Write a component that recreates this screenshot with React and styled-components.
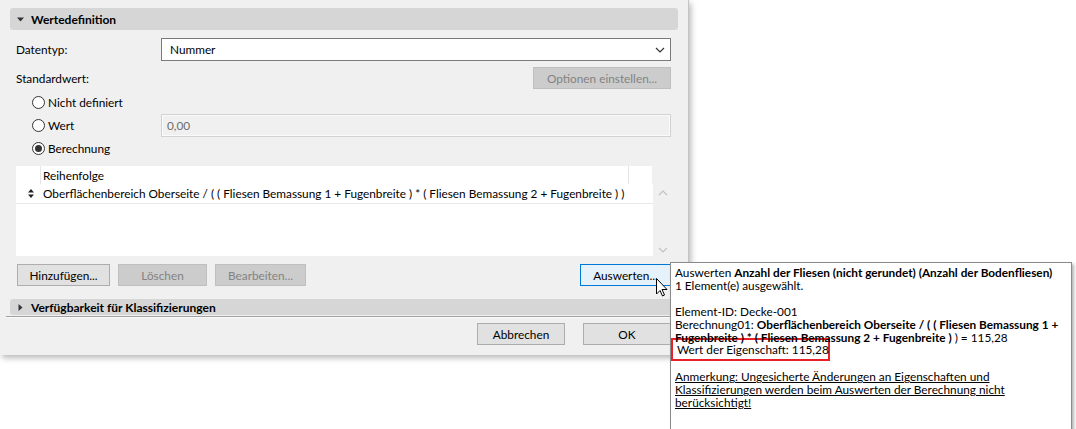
import styled, { createGlobalStyle } from 'styled-components';

const GlobalStyle = createGlobalStyle`
  html, body {
    margin: 0;
    padding: 0;
    background: #ffffff;
  }
  body {
    font-family: Lato, "Liberation Sans", Arial, sans-serif;
    font-size: 11.8px;
    color: #000;
  }
`

const Page = styled.div`
  position: relative;
  width: 1076px;
  height: 429px;
  overflow: hidden;
`

const Dialog = styled.div`
  width: 678px;
  height: 355px;
  padding: 0 10px 0 0;
  background: #f0f0f0;
  border-right: 1px solid #c4c4c4;
  box-shadow: 2px 3px 6px rgba(0, 0, 0, 0.28);
  display: flex;
  flex-direction: column;
`

const Content = styled.div`
  padding-left: 10px;
  display: flex;
  flex-direction: column;
`

const SectionHeader = styled.div`
  margin-top: ${p => p.$top}px;
  height: ${p => p.$h}px;
  background: #d6d6d6;
  border-radius: 3px;
  display: flex;
  align-items: center;
  gap: 7px;
  padding-left: 7px;
  font-weight: bold;
  font-size: 12px;
`

const Form = styled.div`
  padding-left: 6px;
  padding-right: 7px;
  display: flex;
  flex-direction: column;
`

const FieldRow = styled.div`
  display: grid;
  grid-template-columns: 145px 1fr;
  align-items: center;
  height: ${p => p.$h}px;
  margin-top: ${p => p.$top || 0}px;
`

const Select = styled.div`
  height: 21px;
  border: 1px solid #7a7a7a;
  background: #fff;
  display: flex;
  align-items: center;
  justify-content: space-between;
  padding: 0 5px 0 8px;
`

const RightCell = styled.div`
  display: flex;
  justify-content: flex-end;
`

const Button = styled.div`
  box-sizing: border-box;
  width: ${p => p.$w}px;
  height: 22px;
  display: flex;
  align-items: center;
  justify-content: center;
  background: ${p => p.$disabled ? '#cccccc' : p.$focus ? '#e5f1fb' : '#e1e1e1'};
  border: 1px solid ${p => p.$disabled ? '#bfbfbf' : p.$focus ? '#0078d7' : '#adadad'};
  color: ${p => p.$disabled ? '#838383' : '#000'};
  white-space: nowrap;
`

const RadioRow = styled.div`
  display: grid;
  grid-template-columns: 145px 1fr;
  align-items: center;
  height: 23px;
  margin-top: ${p => p.$top || 0}px;
`

const RadioLabel = styled.label`
  display: flex;
  align-items: center;
  gap: 3px;
  padding-left: 16px;
`

const RadioCircle = styled.span`
  box-sizing: border-box;
  width: 13px;
  height: 13px;
  border-radius: 50%;
  border: 1px solid #333;
  background: #fff;
  display: flex;
  align-items: center;
  justify-content: center;
  &::after {
    content: '';
    width: 7px;
    height: 7px;
    border-radius: 50%;
    background: ${p => p.$checked ? '#333' : 'transparent'};
  }
`

const TextInput = styled.div`
  height: 21px;
  border: 1px solid #d2d2d2;
  box-shadow: inset 0 0 0 1px #fafafa;
  background: #f0f0f0;
  color: #6d6d6d;
  display: flex;
  align-items: center;
  padding-left: 5px;
`

const List = styled.div`
  margin-top: 6px;
  height: 90px;
  display: grid;
  grid-template-columns: 637px 16px;
  grid-template-rows: 18px 1fr;
`

const ListHeader = styled.div`
  background: #fff;
  display: grid;
  grid-template-columns: 24px 1fr 24px;
  margin-right: 1px;
`

const HeaderCell = styled.div`
  display: flex;
  align-items: center;
  padding-left: ${p => p.$pad || 0}px;
  border-left: ${p => p.$line ? '1px solid #e5e5e5' : 'none'};
`

const ListBody = styled.div`
  grid-column: 1;
  background: #fff;
`

const ListRow = styled.div`
  height: 19px;
  border-bottom: 1px solid #e8e8e8;
  display: grid;
  grid-template-columns: 27px 1fr;
  align-items: center;
  white-space: nowrap;
`

const SortIcon = styled.span`
  display: flex;
  justify-content: center;
  padding-left: 2px;
`

const Scrollbar = styled.div`
  grid-column: 2;
  grid-row: 2;
  display: flex;
  flex-direction: column;
  justify-content: space-between;
  align-items: center;
  padding: 6px 0 3px 4px;
`

const ButtonRow = styled.div`
  margin-top: 8px;
  display: flex;
  gap: 8px;
  padding-left: 1px;
  & > :last-child {
    margin-left: auto;
  }
`

const Separator = styled.div`
  margin: 1px 0 0 6px;
  border-top: 1px solid #a0a0a0;
  border-bottom: 1px solid #fafafa;
`

const Footer = styled.div`
  margin-top: 5px;
  display: flex;
  justify-content: flex-end;
  gap: 18px;
  padding-right: 7px;
`

const Tooltip = styled.div`
  position: absolute;
  left: 670px;
  top: 262px;
  width: 396px;
  height: 164px;
  padding: 3px 0 0 4px;
  background: #fff;
  border: 1px solid #8a8a8a;
  box-shadow: 2px 2px 3px rgba(0, 0, 0, 0.3);
  line-height: 13px;
  white-space: nowrap;
`

const TipLine = styled.div`
  height: 13px;
`

const Highlight = styled.div`
  margin: -6px 0 -4px -4px;
  padding: 3px 0 3px 4px;
  width: 151px;
  height: 13px;
  border: 2px solid #e8202a;
`

const Note = styled.div`
  text-decoration: underline;
`

const Cursor = styled.svg`
  position: absolute;
  left: 656px;
  top: 278px;
`

const Caret = ({ open }) => (
  <svg width="7" height="7" viewBox="0 0 7 7">
    {open
      ? <path d="M0 1.5 L7 1.5 L3.5 5.5 Z" fill="#333" />
      : <path d="M1.5 0 L5.5 3.5 L1.5 7 Z" fill="#333" />}
  </svg>
)

const Chevron = ({ up, color = '#333', w = 10 }) => (
  <svg width={w} height="6" viewBox="0 0 10 6">
    <path d={up ? 'M1 5 L5 1 L9 5' : 'M1 1 L5 5 L9 1'} fill="none" stroke={color} strokeWidth="1.2" />
  </svg>
)

function App() {
  return (
    <Page>
      <GlobalStyle />
      <Dialog>
        <Content>
          <SectionHeader $top={8} $h={22}>
            <Caret open />
            <span>Wertedefinition</span>
          </SectionHeader>
          <Form>
            <FieldRow $h={23} $top={8}>
              <span>Datentyp:</span>
              <Select>
                <span>Nummer</span>
                <Chevron />
              </Select>
            </FieldRow>
            <FieldRow $h={22} $top={6}>
              <span>Standardwert:</span>
              <RightCell>
                <Button $w={138} $disabled>Optionen einstellen...</Button>
              </RightCell>
            </FieldRow>
            <RadioRow $top={2}>
              <RadioLabel><RadioCircle />Nicht definiert</RadioLabel>
            </RadioRow>
            <RadioRow>
              <RadioLabel><RadioCircle />Wert</RadioLabel>
              <TextInput>0,00</TextInput>
            </RadioRow>
            <RadioRow>
              <RadioLabel><RadioCircle $checked />Berechnung</RadioLabel>
            </RadioRow>
            <List>
              <ListHeader>
                <HeaderCell />
                <HeaderCell $line $pad={2}>Reihenfolge</HeaderCell>
                <HeaderCell $line />
              </ListHeader>
              <ListBody>
                <ListRow>
                  <SortIcon>
                    <svg width="6" height="9" viewBox="0 0 6 9">
                      <path d="M0 3.5 L3 0 L6 3.5 Z M0 5.5 L3 9 L6 5.5 Z" fill="#222" />
                    </svg>
                  </SortIcon>
                  <span>Oberflächenbereich Oberseite / ( ( Fliesen Bemassung 1 + Fugenbreite ) * ( Fliesen Bemassung 2 + Fugenbreite ) )</span>
                </ListRow>
              </ListBody>
              <Scrollbar>
                <Chevron up color="#c2c2c2" />
                <Chevron color="#c2c2c2" />
              </Scrollbar>
            </List>
            <ButtonRow>
              <Button $w={93}>Hinzufügen...</Button>
              <Button $w={89} $disabled>Löschen</Button>
              <Button $w={91} $disabled>Bearbeiten...</Button>
              <Button $w={91} $focus>Auswerten...</Button>
            </ButtonRow>
          </Form>
          <SectionHeader $top={13} $h={16}>
            <Caret />
            <span>Verfügbarkeit für Klassifizierungen</span>
          </SectionHeader>
        </Content>
        <Separator />
        <Footer>
          <Button $w={88}>Abbrechen</Button>
          <Button $w={88}>OK</Button>
        </Footer>
      </Dialog>

      <Tooltip>
        <TipLine>Auswerten <b>Anzahl der Fliesen (nicht gerundet) (Anzahl der Bodenfliesen)</b></TipLine>
        <TipLine>1 Element(e) ausgewählt.</TipLine>
        <TipLine />
        <TipLine>Element-ID: Decke-001</TipLine>
        <TipLine>Berechnung01: <b>Oberflächenbereich Oberseite / ( ( Fliesen Bemassung 1 +</b></TipLine>
        <TipLine><b>Fugenbreite ) * ( Fliesen Bemassung 2 + Fugenbreite )</b> ) = 115,28</TipLine>
        <Highlight>Wert der Eigenschaft: 115,28</Highlight>
        <TipLine />
        <Note>
          <TipLine>Anmerkung: Ungesicherte Änderungen an Eigenschaften und</TipLine>
          <TipLine>Klassifizierungen werden beim Auswerten der Berechnung nicht</TipLine>
          <TipLine>berücksichtigt!</TipLine>
        </Note>
      </Tooltip>

      <Cursor width="12" height="19" viewBox="0 0 12 19">
        <path d="M0.5 0.5 L0.5 16 L4 12.5 L6.5 18 L8.5 17 L6 11.5 L11 11.5 Z" fill="#fff" stroke="#000" strokeWidth="1" strokeLinejoin="round" />
      </Cursor>
    </Page>
  );
}

export default App;
